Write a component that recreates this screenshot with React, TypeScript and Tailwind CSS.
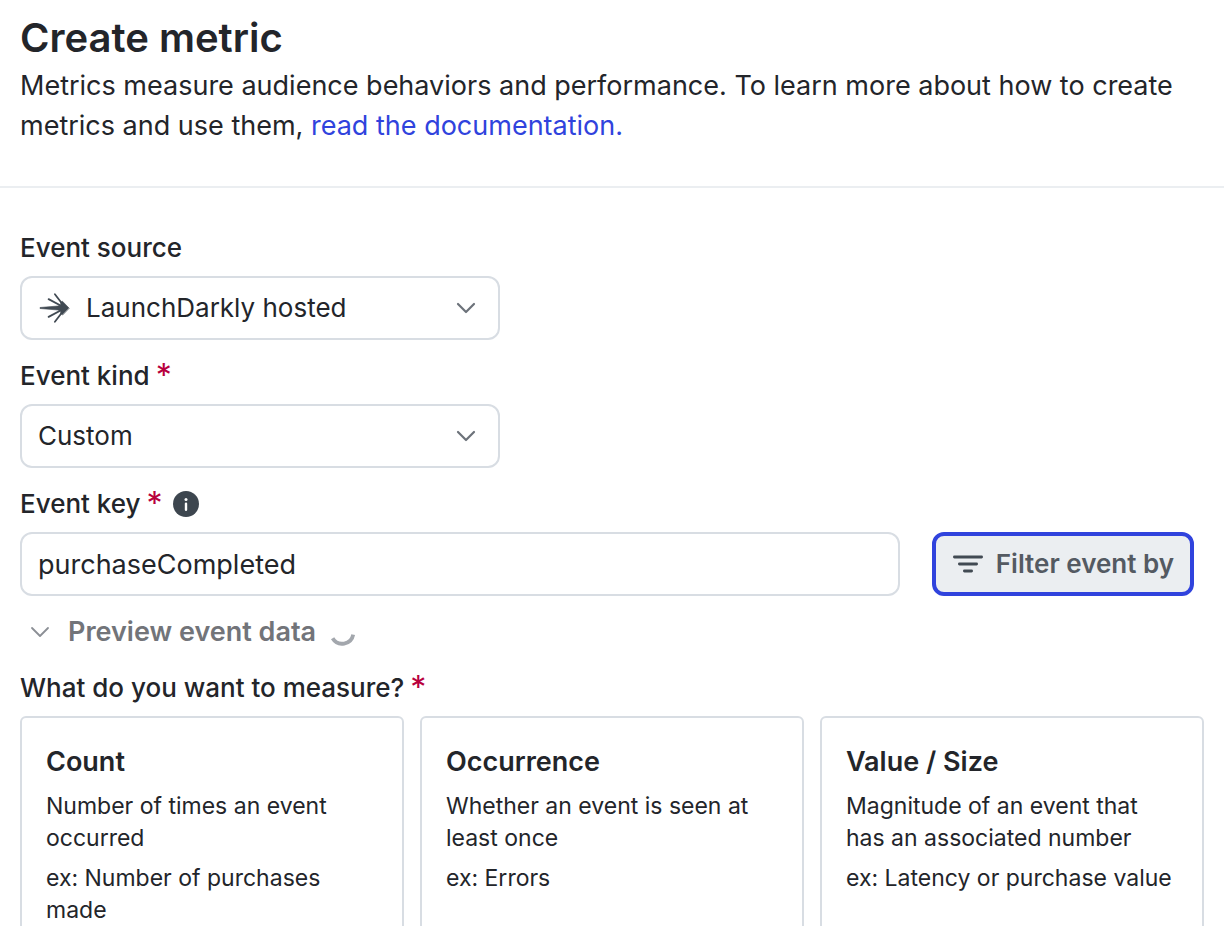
import type { ReactNode } from 'react';

const measures = [
  { title: 'Count', text: 'Number of times an event occurred', example: 'ex: Number of purchases made' },
  { title: 'Occurrence', text: 'Whether an event is seen at least once', example: 'ex: Errors' },
  { title: 'Value / Size', text: 'Magnitude of an event that has an associated number', example: 'ex: Latency or purchase value' },
];

function Chevron({ className }: { className: string }) {
  return (
    <svg viewBox="0 0 20 12" className={`h-3 w-5 ${className}`} fill="none" stroke="currentColor" strokeLinecap="round" strokeLinejoin="round" aria-hidden="true">
      <path d="M2 2l8 8 8-8" />
    </svg>
  );
}

function LaunchDarklyLogo() {
  return (
    <svg viewBox="0 0 40 40" className="h-10 w-10" fill="currentColor" strokeLinecap="round" strokeLinejoin="round" aria-hidden="true">
      <path d="M35 20L28.4 13.2L26.4 14.4L27 16.6L24 18L6 19.5V20.5L24 22L27 23.4L26.4 25.6L28.4 26.8Z" stroke="currentColor" strokeWidth="0.6" />
      <path d="M20.9 6.3L28.4 16M14.6 11.1L27.5 18M20.9 33.7L28.4 24M14.6 28.9L27.5 22" stroke="currentColor" strokeWidth="1.8" />
    </svg>
  );
}

function Required() {
  return <span className="text-[32px] font-normal text-[#b8003d]" aria-hidden="true">*</span>;
}

function SelectBox({ id, options, icon }: { id: string; options: string[]; icon?: ReactNode }) {
  return (
    <div className="relative mt-2 w-full max-w-[480px]">
      {icon && <span className="pointer-events-none absolute inset-y-0 left-3.5 flex items-center text-[#414a53]">{icon}</span>}
      <select
        id={id}
        className={`h-16 w-full appearance-none rounded-xl border-2 border-[#d8dde3] bg-white pr-12 ${icon ? 'pl-16' : 'pl-4'}`}
      >
        {options.map((option) => (
          <option key={option}>{option}</option>
        ))}
      </select>
      <span className="pointer-events-none absolute inset-y-0 right-6 flex items-center text-[#6c727a]">
        <Chevron className="stroke-[2.2]" />
      </span>
    </div>
  );
}

export default function App() {
  return (
    <main className="min-h-screen bg-white font-['Inter',sans-serif] text-[26px] leading-10 text-[#23252a]">
      <header className="border-b-2 border-[#ebeef1] px-5 pt-3.5 pb-10">
        <h1 className="mb-1 text-[40px] leading-12 font-semibold">Create metric</h1>
        <p className="text-[27px]">
          Metrics measure audience behaviors and performance. To learn more about how to create metrics and use them,{' '}
          <a href="#documentation" className="text-[#3043dd]">read the documentation.</a>
        </p>
      </header>

      <form className="flex flex-col gap-4 px-5 pt-10">
        <div>
          <label htmlFor="source" className="block font-medium">Event source</label>
          <SelectBox id="source" options={['LaunchDarkly hosted']} icon={<LaunchDarklyLogo />} />
        </div>

        <div>
          <label htmlFor="kind" className="flex gap-1.5 font-medium">
            Event kind <Required />
          </label>
          <SelectBox id="kind" options={['Custom', 'Page view', 'Click']} />
        </div>

        <div>
          <div className="flex items-center gap-2.5">
            <label htmlFor="key" className="flex gap-1.5 font-medium">
              Event key <Required />
            </label>
            <button type="button" aria-label="About event keys" className="text-[#3d464f]">
              <svg viewBox="0 0 26 26" className="block h-[26px] w-[26px]" aria-hidden="true">
                <circle cx="13" cy="13" r="13" fill="currentColor" />
                <circle cx="13" cy="8.4" r="1.5" fill="#fff" />
                <path d="M13 12.8v6" stroke="#fff" strokeWidth="2.4" strokeLinecap="round" />
              </svg>
            </button>
          </div>
          <div className="mt-2 flex gap-8 pr-2.5">
            <input
              id="key"
              type="text"
              defaultValue="purchaseCompleted"
              className="h-16 min-w-0 flex-1 rounded-xl border-2 border-[#d8dde3] bg-white px-4 text-[27px]"
            />
            <button
              type="button"
              className="flex h-16 shrink-0 items-center gap-3 rounded-xl border-4 border-[#3043dd] bg-[#ebeef1] px-4 font-semibold text-[#545a62]"
            >
              <svg viewBox="0 0 32 20" className="h-5 w-8" fill="none" stroke="#414a53" strokeWidth="2.8" strokeLinecap="round" aria-hidden="true">
                <path d="M2.4 3h27.2M7.4 10h17.2M12.4 17h7.2" />
              </svg>
              Filter event by
            </button>
          </div>
        </div>

        <button type="button" className="flex items-center self-start pl-2.5 text-[27px] font-semibold text-[#727479]">
          <Chevron className="mr-[18px] stroke-[1.8] text-[#8b8f95]" />
          Preview event data
          <svg viewBox="0 0 28 28" className="ml-3 h-7 w-7" fill="none" stroke="#a3a7ad" strokeWidth="3.8" aria-hidden="true">
            <path d="M4.6 20.3A11.2 11.2 0 0 0 25.2 16.6" />
          </svg>
        </button>

        <fieldset>
          <legend className="flex gap-1.5 font-medium">
            What do you want to measure? <Required />
          </legend>
          <div className="mt-2 grid grid-cols-3 gap-4">
            {measures.map((measure) => (
              <button
                key={measure.title}
                type="button"
                className="flex flex-col rounded-md border-2 border-[#d8dde3] p-6 text-left text-[23px] leading-8"
              >
                <span className="mb-2 text-[27px] leading-10 font-semibold">{measure.title}</span>
                <span className="mb-2">{measure.text}</span>
                <span>{measure.example}</span>
              </button>
            ))}
          </div>
        </fieldset>
      </form>
    </main>
  );
}
